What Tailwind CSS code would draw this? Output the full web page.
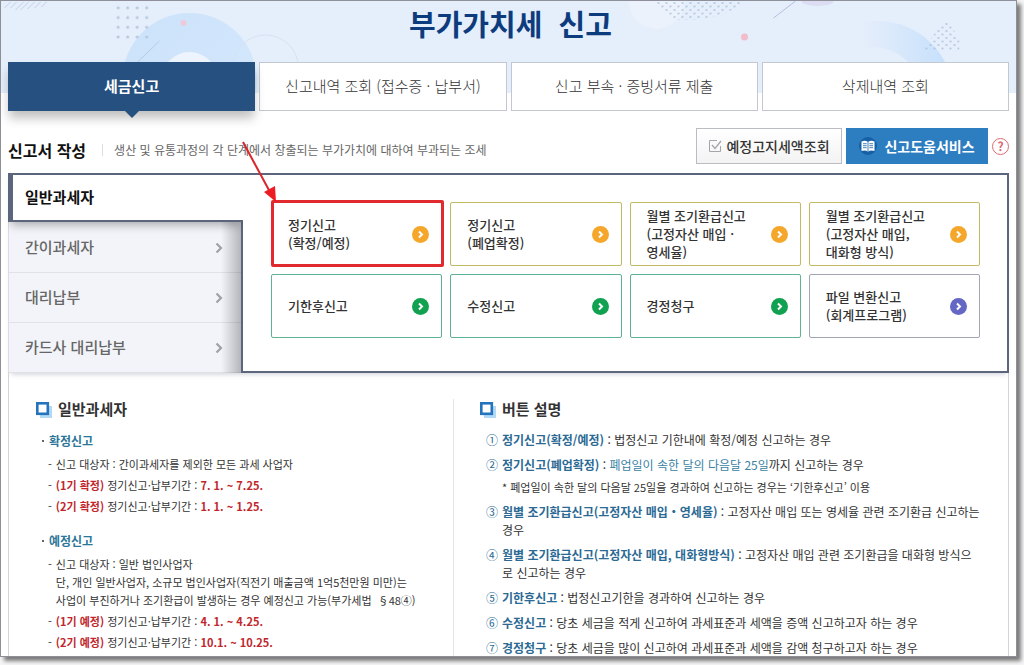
<!DOCTYPE html>
<html lang="ko">
<head>
<meta charset="utf-8">
<title>부가가치세 신고</title>
<script src="https://cdn.jsdelivr.net/npm/@tailwindcss/browser@4"></script>
</head>
<body class="bg-[#f6f6f6] font-['Noto_Sans_CJK_KR',sans-serif] text-[#333]">
<svg class="hidden">
  <defs>
    <symbol id="go" viewBox="0 0 17 17"><circle cx="8.5" cy="8.5" r="8.5" fill="currentColor"/><path d="M7 5.5l3 3-3 3" fill="none" stroke="#fff" stroke-width="2"/></symbol>
    <symbol id="chev" viewBox="0 0 8 12"><path d="M1.5 1.5L6 6l-4.500 4.500" fill="none" stroke="currentColor" stroke-width="2.200"/></symbol>
    <symbol id="sq" viewBox="0 0 17 17"><rect x="5" y="5" width="12" height="12" fill="#b3daf5"/><rect x="2.300" y="2.300" width="10.500" height="10.500" fill="#fff" stroke="#2474bd" stroke-width="2.600"/></symbol>
  </defs>
</svg>
<div class="h-screen pr-[7px] pb-2">
<div class="relative h-full overflow-hidden border border-[#8e8f98] bg-white shadow-[4px_4px_4px_rgba(0,0,0,0.5)]">
  <svg class="absolute top-0 left-0 h-[92px] w-full" viewBox="0 0 1016 92" preserveAspectRatio="xMidYMin slice" aria-hidden="true">
    <defs>
      <linearGradient id="ga" x1="0" y1="0" x2="1" y2="1"><stop offset="0" stop-color="#cbe2fa"/><stop offset="1" stop-color="#d6e9fd"/></linearGradient>
      <linearGradient id="gb" x1="0" y1="0" x2="1" y2="0"><stop offset="0.4" stop-color="#e5eefb"/><stop offset="1" stop-color="#c4dffb"/></linearGradient>
      <pattern id="da" x="113" y="2" width="9.500" height="9.700" patternUnits="userSpaceOnUse"><circle cx="4.700" cy="4.800" r="1.500" fill="#b6c6da"/></pattern>
      <pattern id="db" width="8" height="7" patternUnits="userSpaceOnUse"><circle cx="2" cy="2" r="0.900" fill="#a9bfdc"/><circle cx="6" cy="5.500" r="0.900" fill="#a9bfdc"/></pattern>
    </defs>
    <rect width="1016" height="92" fill="#e5eefb"/>
    <circle cx="189" cy="79" r="67" fill="url(#ga)"/>
    <circle cx="189" cy="79" r="28" fill="#edf4fd"/>
    <circle cx="265" cy="67" r="33" fill="none" stroke="#d6e2f2"/>
    <path d="M4 7l6-6M10 7l6-6M15 9l8-8M20 9l8-8M27 8l7-7M34 7l6-6M41 6l5-5" stroke="#c3d2e8"/>
    <rect x="113" y="2" width="38" height="38.500" fill="url(#da)"/>
    <circle cx="183" cy="22" r="3" fill="#eec9da"/>
    <path d="M135 63l24-23" stroke="#b3cde8"/>
    <circle cx="656" cy="0" r="28" fill="#ecf2fc"/>
    <path d="M650 0h94l-8 7-16 7-24 5h-22z" fill="url(#db)"/>
    <circle cx="744" cy="36" r="3.500" fill="#f2bccb"/>
    <path d="M773 17l22-17" stroke="#b2bfdd"/>
    <ellipse cx="817" cy="0" rx="16" ry="5" fill="#dcdcf3"/>
    <circle cx="877" cy="96" r="76" fill="url(#gb)"/>
    <circle cx="872" cy="96" r="50" fill="#e5eefb"/>
    <path d="M945 18l6 8 8 12v12h-38l12-16z" fill="url(#db)"/>
  </svg>

  <div class="relative px-[7px]">
    <h1 class="h-[61px] pt-1 pl-1 text-center text-[29px] leading-[37px] font-bold text-[#0d3c7e]">부가가치세&nbsp; 신고</h1>
    <nav class="grid grid-cols-4 gap-1 text-[15px]">
      <a href="#" class="relative flex h-[49px] items-center justify-center bg-[#25507f] font-bold text-white shadow-[0_8px_10px_-1px_rgba(0,0,0,0.25)]">세금신고
        <svg class="absolute top-full left-1/2 h-[7px] w-[14px] -translate-x-1/2" viewBox="0 0 14 7"><path d="M0 0h14L7 7z" fill="#25507f"/></svg></a>
      <a href="#" class="flex h-[49px] items-center justify-center border border-[#c3c7cf] bg-white font-light">신고내역 조회 (접수증 · 납부서)</a>
      <a href="#" class="flex h-[49px] items-center justify-center border border-[#c3c7cf] bg-white font-light">신고 부속 · 증빙서류 제출</a>
      <a href="#" class="flex h-[49px] items-center justify-center border border-[#c3c7cf] bg-white font-light">삭제내역 조회</a>
    </nav>

    <div class="flex h-[62px] items-center pt-3">
      <h2 class="pt-1 text-[16px] font-bold text-[#111]">신고서 작성</h2>
      <p class="mt-1 ml-4 border-l border-[#ddd] pl-[11px] text-[12px] leading-[12px] text-[#666]">생산 및 유통과정의 각 단계에서 창출되는 부가가치에 대하여 부과되는 조세</p>
      <div class="mb-1 ml-auto flex items-center gap-1 text-[14px] font-bold">
        <button type="button" class="flex h-9 w-[146px] items-center justify-center gap-1 border border-[#b9bcc2] bg-linear-to-b from-white to-[#f3f3f3] font-medium">
          <svg class="size-[14px]" viewBox="0 0 14 14" fill="none" stroke="#a3a6aa"><path d="M9 1.500H1.500v11h11V7"/><path d="M4 6l3 3.500L13 2" stroke-width="1.300"/></svg>예정고지세액조회</button>
        <button type="button" class="flex h-9 w-[142px] items-center justify-center gap-[7px] bg-[#2d7dc1] text-white">
          <svg class="size-[18px]" viewBox="0 0 18 18"><circle cx="9" cy="9" r="9" fill="#1560a6"/><path d="M2.500 4.500Q6 3 9 5q3-2 6.500-.5V14Q12 12.800 9 14.500 6 12.800 2.500 14z" fill="#fff"/><path d="M9 5v9M4 6.700h3.700M4 8.700h3.700M4 10.700h3.700M10.300 6.700H14M10.300 8.700H14M10.300 10.700H14" stroke="#1560a6" stroke-width=".8"/></svg>신고도움서비스</button>
        <button type="button" aria-label="도움말" class="flex size-[17px] items-center justify-center rounded-full border border-[#dd6a72] text-[12px] leading-none text-[#dd6a72]">?</button>
      </div>
    </div>

    <div class="flex shadow-[0_4px_5px_-3px_rgba(80,90,120,0.3)]">
      <div class="flex w-[235px] flex-col overflow-hidden text-[15px] font-bold">
        <a href="#" class="relative z-10 flex h-[49px] items-center border-y-2 border-l-5 border-[#5b667c] bg-white pl-3 text-[#111] shadow-[0_6px_9px_-3px_rgba(0,0,0,0.3)]">일반과세자</a>
        <div class="flex-1 border-r-2 border-l border-r-[#5b667c] border-l-[#dcdde2] bg-[#f3f4f9]">
          <div class="bg-linear-to-l from-[#b4b6bc] to-transparent to-[20px] pt-px font-medium text-[#666]">
            <a href="#" class="flex h-[50px] items-center justify-between border-b border-black/7 pr-[18px] pl-4">간이과세자<svg class="h-3 w-2 text-[#a0a0a6]"><use href="#chev"/></svg></a>
            <a href="#" class="flex h-[50px] items-center justify-between border-b border-black/7 pr-[18px] pl-4">대리납부<svg class="h-3 w-2 text-[#a0a0a6]"><use href="#chev"/></svg></a>
            <a href="#" class="flex h-[50px] items-center justify-between border-b border-black/7 pr-[18px] pl-4">카드사 대리납부<svg class="h-3 w-2 text-[#a0a0a6]"><use href="#chev"/></svg></a>
          </div>
        </div>
      </div>
      <div class="grid flex-1 grid-cols-4 content-start gap-2 border-y-2 border-r-2 border-[#5b667c] bg-white pt-[27px] pr-[27px] pb-[33px] pl-7 text-[13px] leading-[18px] font-medium">
        <a href="#" class="relative flex h-16 items-center justify-between rounded-[2px] border border-[#c2bb63] pr-3 pl-4"><span>정기신고<br>(확정/예정)</span><svg class="size-[17px] text-[#f5a72b]"><use href="#go"/></svg>
          <span class="absolute -top-[3px] -right-[3px] -bottom-[2px] -left-px rounded-[2px] border-3 border-[#e02a2e]"></span>
          <svg class="absolute -top-[62px] -left-[30px] h-[62px] w-[36px]" viewBox="0 0 36 62"><path d="M1 1l27 50" stroke="#d8262c" stroke-width="2"/><path d="M34 61L22 51l11-6z" fill="#ec1c24"/></svg></a>
        <a href="#" class="flex h-16 items-center justify-between rounded-[2px] border border-[#c2bb63] pr-3 pl-4"><span>정기신고<br>(폐업확정)</span><svg class="size-[17px] text-[#f5a72b]"><use href="#go"/></svg></a>
        <a href="#" class="flex h-16 items-center justify-between rounded-[2px] border border-[#c2bb63] pr-3 pl-4"><span>월별 조기환급신고<br>(고정자산 매입 ·<br>영세율)</span><svg class="size-[17px] text-[#f5a72b]"><use href="#go"/></svg></a>
        <a href="#" class="flex h-16 items-center justify-between rounded-[2px] border border-[#c2bb63] pr-3 pl-4"><span>월별 조기환급신고<br>(고정자산 매입,<br>대화형 방식)</span><svg class="size-[17px] text-[#f5a72b]"><use href="#go"/></svg></a>
        <a href="#" class="flex h-16 items-center justify-between rounded-[2px] border border-[#5fb392] pr-3 pl-4"><span>기한후신고</span><svg class="size-[17px] text-[#12a150]"><use href="#go"/></svg></a>
        <a href="#" class="flex h-16 items-center justify-between rounded-[2px] border border-[#5fb392] pr-3 pl-4"><span>수정신고</span><svg class="size-[17px] text-[#12a150]"><use href="#go"/></svg></a>
        <a href="#" class="flex h-16 items-center justify-between rounded-[2px] border border-[#5fb392] pr-3 pl-4"><span>경정청구</span><svg class="size-[17px] text-[#12a150]"><use href="#go"/></svg></a>
        <a href="#" class="flex h-16 items-center justify-between rounded-[2px] border border-[#a3a6b4] pr-3 pl-4"><span>파일 변환신고<br>(회계프로그램)</span><svg class="size-[17px] text-[#6467c4]"><use href="#go"/></svg></a>
      </div>
    </div>

    <div class="flex border-x border-[#d2d3d8] pt-[26px] whitespace-nowrap">
      <section class="w-[445px] shrink-0 border-r border-[#e6e6e6] pl-[26px] text-[11px]">
        <h3 class="flex h-5 items-center gap-[6px] text-[15px] font-bold"><svg class="size-[17px]"><use href="#sq"/></svg>일반과세자</h3>
        <h4 class="mt-3 flex h-5 items-center gap-[5px] pl-[7px] text-[12px] font-bold text-[#2b7699]"><span class="size-[2px] bg-[#666]"></span>확정신고</h4>
        <ul class="mt-1 space-y-[3px] pl-[13px] leading-[18px]">
          <li class="flex gap-1"><span>-</span><span>신고 대상자 : 간이과세자를 제외한 모든 과세 사업자</span></li>
          <li class="flex gap-1"><span>-</span><span><b class="text-[#c0272d]">(1기 확정)</b> 정기신고·납부기간 : <b class="text-[#c0272d]">7. 1. ~ 7.25.</b></span></li>
          <li class="flex gap-1"><span>-</span><span><b class="text-[#c0272d]">(2기 확정)</b> 정기신고·납부기간 : <b class="text-[#c0272d]">1. 1. ~ 1.25.</b></span></li>
        </ul>
        <h4 class="mt-4 flex h-5 items-center gap-[5px] pl-[7px] text-[12px] font-bold text-[#2b7699]"><span class="size-[2px] bg-[#666]"></span>예정신고</h4>
        <ul class="mt-1 space-y-[3px] pl-[13px] leading-[18px]">
          <li class="flex gap-1"><span>-</span><span>신고 대상자 : 일반 법인사업자<br>단, 개인 일반사업자, 소규모 법인사업자(직전기 매출금액 1억5천만원 미만)는<br>사업이 부진하거나 조기환급이 발생하는 경우 예정신고 가능(부가세법&nbsp; §48④)</span></li>
          <li class="flex gap-1"><span>-</span><span><b class="text-[#c0272d]">(1기 예정)</b> 정기신고·납부기간 : <b class="text-[#c0272d]">4. 1. ~ 4.25.</b></span></li>
          <li class="flex gap-1"><span>-</span><span><b class="text-[#c0272d]">(2기 예정)</b> 정기신고·납부기간 : <b class="text-[#c0272d]">10.1. ~ 10.25.</b></span></li>
        </ul>
      </section>
      <section class="flex-1 pl-[25px] text-[12px]">
        <h3 class="flex h-5 items-center gap-[6px] text-[15px] font-bold"><svg class="size-[17px]"><use href="#sq"/></svg>버튼 설명</h3>
        <ol class="mt-3 space-y-[7px] pl-[7px] leading-[18px]">
          <li class="flex gap-1"><span class="text-[#2b6a94]">①</span><span><b class="text-[#2b6a94]">정기신고(확정/예정)</b> : 법정신고 기한내에 확정/예정 신고하는 경우</span></li>
          <li class="flex gap-1"><span class="text-[#2b6a94]">②</span><div><b class="text-[#2b6a94]">정기신고(폐업확정)</b> : <span class="text-[#3b7fa3]">폐업일이 속한 달의 다음달 25일</span>까지 신고하는 경우<p class="mt-1 text-[11px]">* 폐업일이 속한 달의 다음달 25일을 경과하여 신고하는 경우는 ‘기한후신고’ 이용</p></div></li>
          <li class="flex gap-1"><span class="text-[#2b6a94]">③</span><span><b class="text-[#2b6a94]">월별 조기환급신고(고정자산 매입・영세율)</b> : 고정자산 매입 또는 영세율 관련 조기환급 신고하는<br>경우</span></li>
          <li class="flex gap-1"><span class="text-[#2b6a94]">④</span><span><b class="text-[#2b6a94]">월별 조기환급신고(고정자산 매입, 대화형방식)</b> : 고정자산 매입 관련 조기환급을 대화형 방식으<br>로 신고하는 경우</span></li>
          <li class="flex gap-1"><span class="text-[#2b6a94]">⑤</span><span><b class="text-[#2b6a94]">기한후신고</b> : 법정신고기한을 경과하여 신고하는 경우</span></li>
          <li class="flex gap-1"><span class="text-[#2b6a94]">⑥</span><span><b class="text-[#2b6a94]">수정신고</b> : 당초 세금을 적게 신고하여 과세표준과 세액을 증액 신고하고자 하는 경우</span></li>
          <li class="flex gap-1"><span class="text-[#2b6a94]">⑦</span><span><b class="text-[#2b6a94]">경정청구</b> : 당초 세금을 많이 신고하여 과세표준과 세액을 감액 청구하고자 하는 경우</span></li>
        </ol>
      </section>
    </div>
  </div>
</div>
</div>
</body>
</html>
